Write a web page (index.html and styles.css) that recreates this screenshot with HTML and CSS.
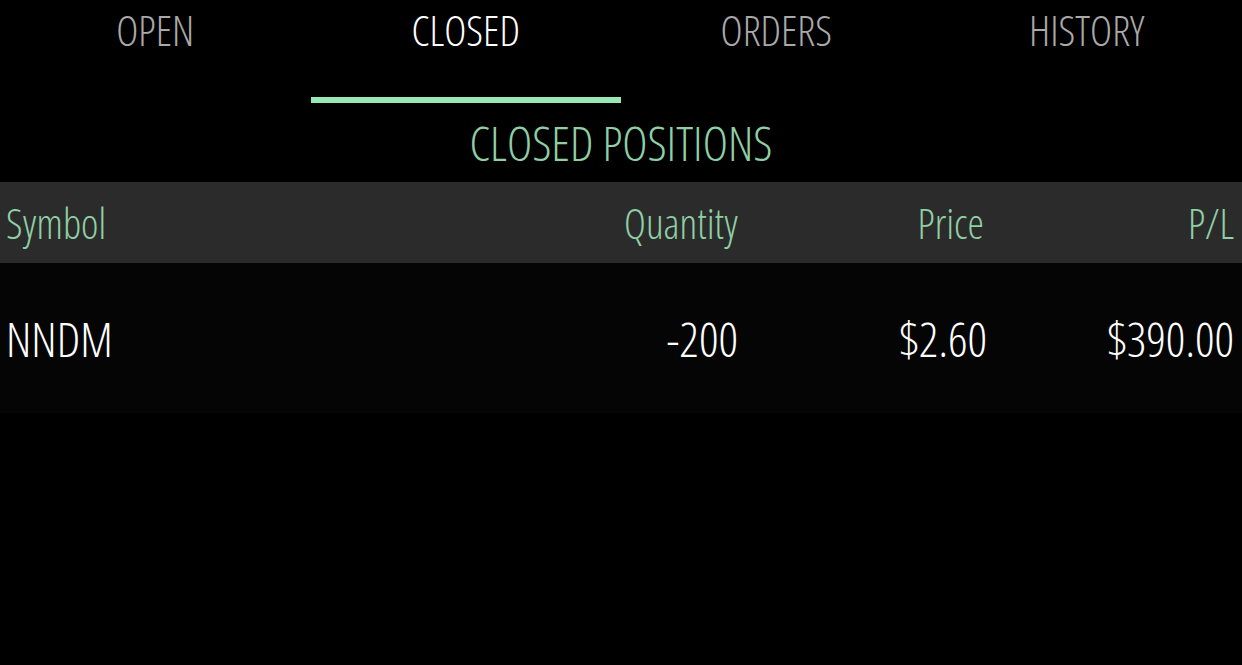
FILE: index.html
```html
<!DOCTYPE html>
<html>
<head>
<meta charset="utf-8">
<link rel="stylesheet" href="styles.css">
</head>
<body>
<nav class="tabs">
  <div class="tab">OPEN</div>
  <div class="tab active">CLOSED</div>
  <div class="tab">ORDERS</div>
  <div class="tab">HISTORY</div>
</nav>
<div class="indicator-track"><div class="indicator"></div></div>
<h1 class="title">CLOSED POSITIONS</h1>
<div class="table">
  <div class="row head">
    <div class="c sym">Symbol</div>
    <div class="c qty">Quantity</div>
    <div class="c price">Price</div>
    <div class="c pl">P/L</div>
  </div>
  <div class="row data">
    <div class="c sym">NNDM</div>
    <div class="c qty">-200</div>
    <div class="c price">$2.60</div>
    <div class="c pl">$390.00</div>
  </div>
</div>
</body>
</html>
```
FILE: styles.css
```css
html, body {
  margin: 0;
  padding: 0;
  background: #000;
  width: 1242px;
  height: 665px;
  overflow: hidden;
}
body {
  font-family: "Open Sans", "Liberation Sans", sans-serif;
  font-weight: 300;
  font-stretch: 75%;
}
.tabs {
  display: grid;
  grid-template-columns: repeat(4, 1fr);
  height: 64px;
}
.tab {
  text-align: center;
  color: #a9a9a9;
  font-size: 42px;
  line-height: 60px;
}
.tab.active { color: #fff; }
.indicator-track {
  display: grid;
  grid-template-columns: repeat(4, 1fr);
  margin-top: 33px;
  height: 6px;
}
.indicator {
  grid-column: 2;
  background: #97e8b5;
}
.title {
  margin: 0;
  height: 79px;
  text-align: center;
  color: #8fcfa5;
  font-weight: 300;
  font-size: 48px;
  line-height: 80px;
}
.row {
  display: grid;
  grid-template-columns: 1fr 240px 246px 250px;
  padding: 0 8px 0 6px;
  align-items: center;
}
.head {
  background: #2b2b2b;
  height: 81px;
  color: #8fcfa5;
  font-size: 41.5px;
}
.data {
  background: #050505;
  height: 150px;
  color: #fff;
  font-size: 48px;
}
.data .price { margin-right: -3px; }
.c { white-space: nowrap; }
.qty, .price, .pl { text-align: right; }
```
